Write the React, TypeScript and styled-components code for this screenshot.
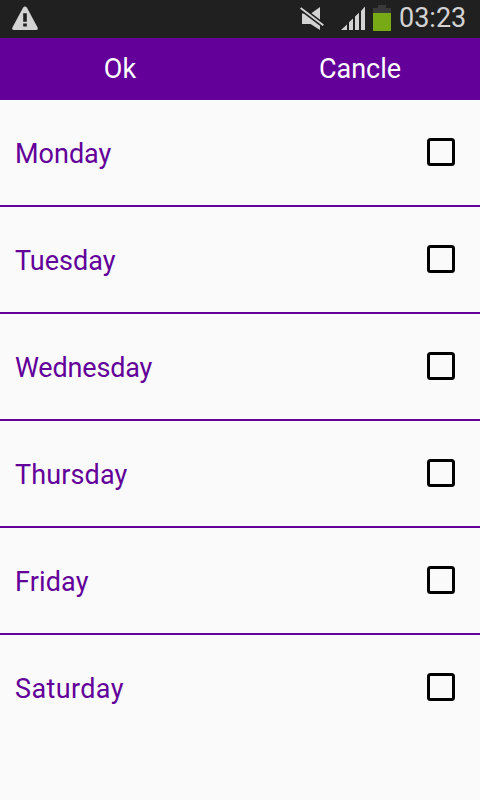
import React from "react";
import styled, { createGlobalStyle } from "styled-components";

const GlobalStyle = createGlobalStyle`
  html, body { margin: 0; padding: 0; background: #fafafa; }
  * { box-sizing: border-box; }
`;

const Screen = styled.main`
  width: 480px;
  height: 800px;
  display: flex;
  flex-direction: column;
  overflow: hidden;
  background: #fafafa;
  font-family: Roboto, "Liberation Sans", sans-serif;
  font-size: 27px;
  line-height: 32px;
`;

const StatusBar = styled.header`
  height: 38px;
  flex: none;
  display: flex;
  align-items: flex-start;
  justify-content: space-between;
  padding: 0 13px 0 12px;
  background: #202020;
  color: #d3d3d3;
`;

const StatusGroup = styled.div`
  display: flex;
  align-items: flex-start;
`;

const Glyph = styled.svg<{ $gap?: number; $top?: number }>`
  display: block;
  flex: none;
  margin: ${(p) => p.$top ?? 6}px ${(p) => p.$gap ?? 0}px 0 0;
`;

const Clock = styled.time`
  width: 68px;
  padding-top: 2px;
  white-space: nowrap;
`;

const ActionBar = styled.nav`
  height: 62px;
  flex: none;
  display: grid;
  grid-template-columns: 1fr 1fr;
  background: #620099;
`;

const ActionButton = styled.button`
  border: 0;
  padding: 0;
  background: transparent;
  color: #ffffff;
  font: inherit;
`;

const DayList = styled.ul`
  list-style: none;
  margin: 0;
  padding: 0;
`;

const DayRow = styled.li`
  height: 107px;
  border-bottom: 2px solid #620099;
  &:last-child { border-bottom: 0; }
`;

const DayLabel = styled.label`
  display: flex;
  align-items: flex-start;
  justify-content: space-between;
  padding: 38px 25px 0 15px;
`;

const DayName = styled.span<{ $spacing: number }>`
  color: #620099;
  letter-spacing: ${(p) => p.$spacing}px;
`;

const Checkbox = styled.input`
  appearance: none;
  width: 28px;
  height: 28px;
  margin: 0;
  border: 3px solid #000000;
  border-radius: 3.5px;
  background: #fafafa;
  &:checked { background: #620099; }
`;

const days = [
  { name: "Monday", spacing: 0 },
  { name: "Tuesday", spacing: 0 },
  { name: "Wednesday", spacing: -0.18 },
  { name: "Thursday", spacing: 0.12 },
  { name: "Friday", spacing: 0.15 },
  { name: "Saturday", spacing: 0.38 },
];

const WarningIcon = () => (
  <Glyph width="26" height="25" viewBox="0 0 26 25">
    <path d="M11 1.8Q13 -1 15 1.8L25.6 21.5Q26.5 24 24 24H2Q-.5 24 .4 21.5Z" fill="#d3d3d3" />
    <path d="M11.2 7.2h3.6v8.6h-3.6zM11.2 17.4h3.6v3.1h-3.6z" fill="#202020" />
  </Glyph>
);

const MutedIcon = () => (
  <Glyph width="25" height="25" viewBox="0 0 25 25" $gap={16}>
    <path d="M2 7.5h9L20 1v23L10.5 18H2z" fill="#d3d3d3" />
    <path d="M-1 .8L25 20.6" stroke="#202020" strokeWidth="5" />
    <path d="M.6 2L23.3 19.3" stroke="#d3d3d3" strokeWidth="1.9" />
  </Glyph>
);

const SignalIcon = () => (
  <Glyph width="25" height="25" viewBox="0 0 25 25" $gap={7}>
    <path d="M0 24L6 18.4V24zM8 16.2L12 12.4V24H8zM14 10.6L18 6.8V24H14zM20 5L24 .5V24H20z" fill="#d3d3d3" />
  </Glyph>
);

const BatteryIcon = () => (
  <Glyph width="18" height="26" viewBox="0 0 18 26" $gap={8} $top={5}>
    <path d="M0 3h5V0h8v3h5v5H0z" fill="#3a3a3a" />
    <path d="M0 8h18v18H0z" fill="#78aa16" />
  </Glyph>
);

export default function App() {
  return (
    <Screen>
      <GlobalStyle />
      <StatusBar>
        <WarningIcon />
        <StatusGroup>
          <MutedIcon />
          <SignalIcon />
          <BatteryIcon />
          <Clock>03:23</Clock>
        </StatusGroup>
      </StatusBar>
      <ActionBar>
        <ActionButton>Ok</ActionButton>
        <ActionButton>Cancle</ActionButton>
      </ActionBar>
      <DayList>
        {days.map((day) => (
          <DayRow key={day.name}>
            <DayLabel>
              <DayName $spacing={day.spacing}>{day.name}</DayName>
              <Checkbox type="checkbox" />
            </DayLabel>
          </DayRow>
        ))}
      </DayList>
    </Screen>
  );
}
